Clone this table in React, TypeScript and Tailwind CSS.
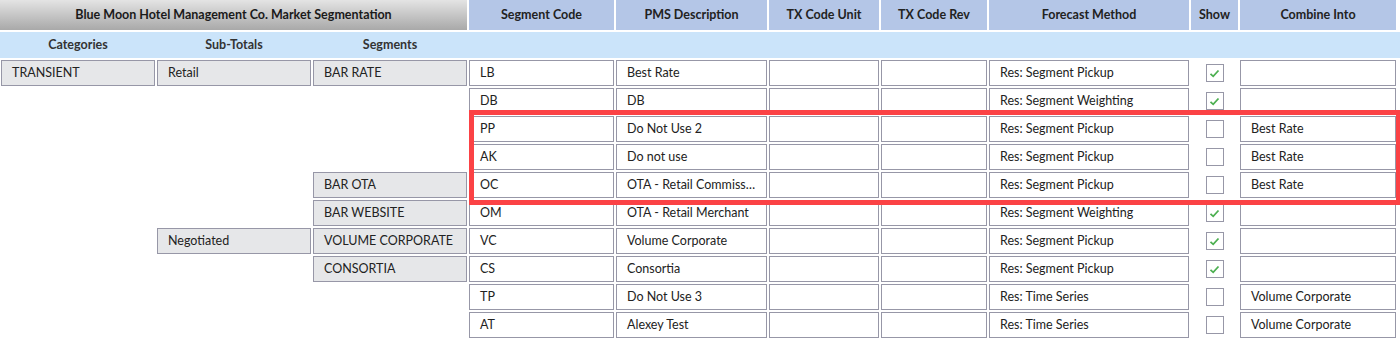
import React from 'react'

type Row = {
  cat?: string
  sub?: string
  seg?: string
  code: string
  pms: string
  method: string
  show: boolean
  combine: string
}

const rows: Row[] = [
  { cat: 'TRANSIENT', sub: 'Retail', seg: 'BAR RATE', code: 'LB', pms: 'Best Rate', method: 'Res: Segment Pickup', show: true, combine: '' },
  { code: 'DB', pms: 'DB', method: 'Res: Segment Weighting', show: true, combine: '' },
  { code: 'PP', pms: 'Do Not Use 2', method: 'Res: Segment Pickup', show: false, combine: 'Best Rate' },
  { code: 'AK', pms: 'Do not use', method: 'Res: Segment Pickup', show: false, combine: 'Best Rate' },
  { seg: 'BAR OTA', code: 'OC', pms: 'OTA - Retail Commiss…', method: 'Res: Segment Pickup', show: false, combine: 'Best Rate' },
  { seg: 'BAR WEBSITE', code: 'OM', pms: 'OTA - Retail Merchant', method: 'Res: Segment Weighting', show: true, combine: '' },
  { sub: 'Negotiated', seg: 'VOLUME CORPORATE', code: 'VC', pms: 'Volume Corporate', method: 'Res: Segment Pickup', show: true, combine: '' },
  { seg: 'CONSORTIA', code: 'CS', pms: 'Consortia', method: 'Res: Segment Pickup', show: true, combine: '' },
  { code: 'TP', pms: 'Do Not Use 3', method: 'Res: Time Series', show: false, combine: 'Volume Corporate' },
  { code: 'AT', pms: 'Alexey Test', method: 'Res: Time Series', show: false, combine: 'Volume Corporate' },
]

const cols = 'grid grid-cols-[154px_154px_154px_145px_151px_110px_106px_200px_47px_156px] gap-x-[2px]'

const Tree = ({ label }: { label?: string }) =>
  label ? (
    <div className="h-[26px] border border-[#9797a7] bg-[#e6e7e9] px-[10px] flex items-center whitespace-nowrap">{label}</div>
  ) : (
    <div />
  )

const Cell = ({ children }: { children?: React.ReactNode }) => (
  <div className="h-[26px] border border-[#9797a7] bg-white pl-[10px] flex items-center min-w-0 whitespace-nowrap">
    {children}
  </div>
)

const Check = ({ on }: { on: boolean }) => (
  <div className="h-[26px] flex items-center justify-center">
    <div className="w-[18px] h-[18px] border border-[#9797a7] bg-white flex items-center justify-center">
      {on && (
        <svg width="11" height="9" viewBox="0 0 11 9">
          <path d="M1.5 4.8 L4.2 7.3 L9.5 1.5" fill="none" stroke="#4caf50" strokeWidth="1.8" />
        </svg>
      )}
    </div>
  </div>
)

const HeadCell = ({ children }: { children: React.ReactNode }) => (
  <div className="h-[30px] bg-[#b4c6e7] flex items-center justify-center font-bold">{children}</div>
)

export default function App() {
  return (
    <div className="relative w-[1400px] h-[340px] bg-white text-[12.5px] text-[#222] overflow-hidden" style={{ fontFamily: 'Lato, "Noto Sans", sans-serif' }}>
      <div className={`${cols} pl-px`}>
        <div className="col-span-3 -ml-px h-[30px] bg-gradient-to-b from-[#e4e4e4] to-[#a9a9a9] flex items-center justify-center font-bold text-[#1a1a1a]">
          Blue Moon Hotel Management Co. Market Segmentation
        </div>
        <HeadCell>Segment Code</HeadCell>
        <HeadCell>PMS Description</HeadCell>
        <HeadCell>TX Code Unit</HeadCell>
        <HeadCell>TX Code Rev</HeadCell>
        <HeadCell>Forecast Method</HeadCell>
        <HeadCell>Show</HeadCell>
        <HeadCell>Combine Into</HeadCell>
      </div>

      <div className={`${cols} pl-px mt-[2px] h-[26px] bg-[#cbe4fa] items-center font-bold text-[#333]`}>
        <div className="text-center">Categories</div>
        <div className="text-center">Sub-Totals</div>
        <div className="text-center">Segments</div>
      </div>

      <div className="flex flex-col gap-[2px] mt-[2px] pl-px">
        {rows.map((r, i) => (
          <div key={i} className={cols}>
            <Tree label={r.cat} />
            <Tree label={r.sub} />
            <Tree label={r.seg} />
            <Cell>{r.code}</Cell>
            <Cell>{r.pms}</Cell>
            <Cell />
            <Cell />
            <Cell>{r.method}</Cell>
            <Check on={r.show} />
            <Cell>{r.combine}</Cell>
          </div>
        ))}
      </div>

      {/* highlight around the combined segments */}
      <div className="absolute left-[469px] top-[110px] w-[932px] h-[95px] border-[5px] border-[#fb4245] pointer-events-none" />
    </div>
  )
}
